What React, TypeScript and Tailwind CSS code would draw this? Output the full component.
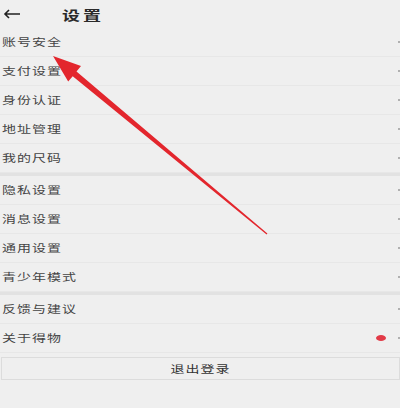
import React from "react";

const groups: { label: string; dot?: boolean }[][] = [
  [{ label: "账号安全" }, { label: "支付设置" }, { label: "身份认证" }, { label: "地址管理" }, { label: "我的尺码" }],
  [{ label: "隐私设置" }, { label: "消息设置" }, { label: "通用设置" }, { label: "青少年模式" }],
  [{ label: "反馈与建议" }, { label: "关于得物", dot: true }],
];

function Row({ label, dot }: { label: string; dot?: boolean }) {
  return (
    <div className="h-[29px] flex items-center justify-between pl-[2px] border-b border-[#e7e7e7] overflow-hidden">
      <span className="inline-block text-[14px] tracking-[1px] text-[#444] scale-y-[0.72] origin-left leading-none">
        {label}
      </span>
      <div className="flex items-center">
        {dot && <span className="w-[10px] h-[6px] rounded-[50%] bg-[#e23a47] mr-[12px]" />}
        <span className="w-[3px] h-[2px] bg-[#b0b0b0] mr-[-1px]" />
      </div>
    </div>
  );
}

export default function App() {
  return (
    <div
      className="relative w-[400px] h-[408px] overflow-hidden bg-[#efefef]"
      style={{ fontFamily: '"Noto Sans CJK SC", "Noto Sans", sans-serif' }}
    >
      <div className="h-[28px] flex items-center">
        <svg width="18" height="10" viewBox="0 0 18 10" className="ml-[3px]">
          <path d="M17 5H2M6 1L2 5l4 4" stroke="#222" strokeWidth="1.6" fill="none" />
        </svg>
        <span className="inline-block ml-[41px] text-[18px] tracking-[3px] font-semibold text-[#2a2a2a] scale-y-[0.72] origin-left leading-none">
          设置
        </span>
      </div>

      {groups.map((g, i) => (
        <div key={i}>
          {i > 0 && <div className="h-[3px] bg-[#e2e2e2]" />}
          {g.map((r) => (
            <Row key={r.label} label={r.label} dot={r.dot} />
          ))}
        </div>
      ))}

      <div className="mt-[4px] ml-[1px] h-[23px] border border-[#dcdcdc] flex items-center justify-center">
        <span className="inline-block text-[14px] tracking-[1px] text-[#333] scale-y-[0.72] leading-none">
          退出登录
        </span>
      </div>

      <svg className="absolute inset-0 pointer-events-none" width="400" height="408" viewBox="0 0 400 408">
        <polygon
          points="53,56 81,66 76.5,71.6 267.4,233.6 266.6,234.4 72.7,76.2 68.2,81.6"
          fill="#e3262d"
        />
      </svg>
    </div>
  );
}
